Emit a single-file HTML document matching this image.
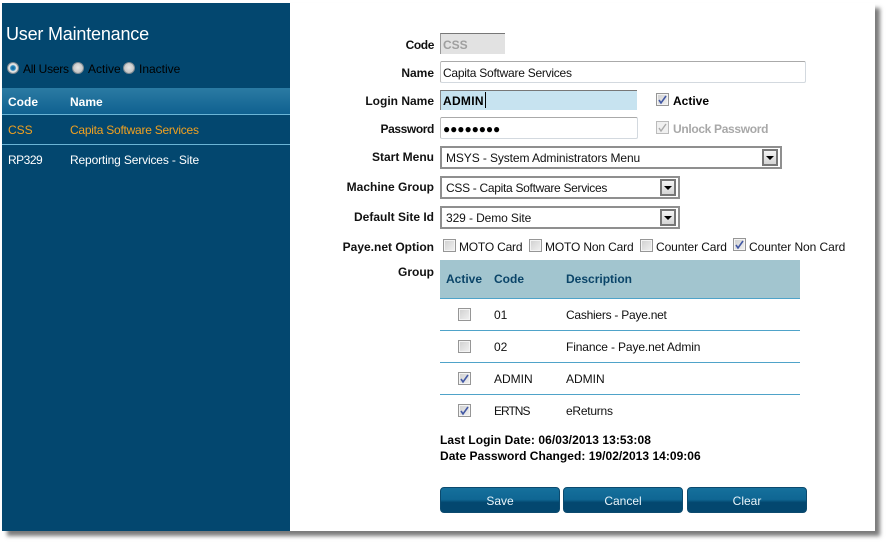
<!DOCTYPE html>
<html><head><meta charset="utf-8"><style>
html,body{margin:0;padding:0}
body{width:888px;height:544px;background:#fff;position:relative;overflow:hidden;font-family:"Liberation Sans",sans-serif;font-size:12px;color:#111}
div,span.a{position:absolute;white-space:nowrap;box-sizing:border-box}
#win{left:2px;top:3px;width:873px;height:528px;background:#fff;box-shadow:5px 5px 4px 0 #7c7c7c}
#side{left:2px;top:3px;width:288px;height:528px;background:#03476f}
.lab{right:454px;font-weight:bold;line-height:16px;height:16px;color:#111}
.t{line-height:16px;height:16px}
.inp{background:#fff;border:1px solid #d3d9df;border-top-color:#aaa;border-left-color:#c0c0c0;border-radius:2px}
.sel{background:#fff;border:2px solid #8f8f8f;height:23px}
.sel .tx{left:4px;top:2px;line-height:16px}
.arr{top:1px;width:16px;height:17px;right:2px;border:2px solid #777;background:linear-gradient(#f4f4f4,#d4d4d4)}
.arr:after{content:"";position:absolute;left:2px;top:5px;border:4px solid transparent;border-top:4px solid #000;border-bottom:0}
.cb{width:13px;height:13px;border:1px solid #969696;background:linear-gradient(135deg,#cfcfcf,#f2f2f2);box-shadow:inset 0 0 0 1px #f4f4f4}
.cb svg{position:absolute;left:0;top:0}
.rad{width:12px;height:12px;border-radius:50%;border:1px solid #7d8a93;background:radial-gradient(circle at 50% 45%,#e6e6e6,#b4b4b4)}
.hr{height:1px;background:#4fa3c9}
.btn{top:487px;height:26px;width:120px;border-radius:4px;background:linear-gradient(#15709c 0,#0f6693 48%,#03476f 60%,#03476f 100%);border:1px solid #0c4a6e;color:#e8f4fa;text-align:center;line-height:26px}
</style></head><body>
<div id="win"></div>
<div id="side"></div>
<div style="left:6px;top:23px;font-size:18px;line-height:22px;color:#fff;letter-spacing:-.2px">User Maintenance</div>
<div class="rad" style="left:7px;top:62px;background:radial-gradient(circle,#0d5f96 0,#2a8ac0 32%,#e8e8e8 48%,#b8b8b8 100%)"></div>
<div class="t" style="left:23px;top:61px;color:#000;letter-spacing:-.25px">All Users</div>
<div class="rad" style="left:72px;top:62px"></div>
<div class="t" style="left:88px;top:61px;color:#000">Active</div>
<div class="rad" style="left:123px;top:62px"></div>
<div class="t" style="left:139px;top:61px;color:#000">Inactive</div>
<div style="left:2px;top:88px;width:288px;height:26px;background:linear-gradient(#2b7ba3,#0f6190)"></div>
<div class="t" style="left:8px;top:94px;color:#fff;font-weight:bold">Code</div>
<div class="t" style="left:70px;top:94px;color:#fff;font-weight:bold">Name</div>
<div class="hr" style="left:2px;top:114px;width:288px;background:#6bb5d6"></div>
<div class="t" style="left:8px;top:122px;color:#f0a020">CSS</div>
<div class="t" style="left:70px;top:122px;color:#f0a020;letter-spacing:-.25px">Capita Software Services</div>
<div class="hr" style="left:2px;top:144px;width:288px;background:#6bb5d6"></div>
<div class="t" style="left:8px;top:152px;color:#fff;letter-spacing:-.5px">RP329</div>
<div class="t" style="left:70px;top:152px;color:#fff;letter-spacing:-.15px">Reporting Services - Site</div>

<div class="lab" style="top:37px;letter-spacing:-.4px">Code</div>
<div class="lab" style="top:65px">Name</div>
<div class="lab" style="top:93px">Login Name</div>
<div class="lab" style="top:121px;letter-spacing:-.4px">Password</div>
<div class="lab" style="top:149px">Start Menu</div>
<div class="lab" style="top:179px">Machine Group</div>
<div class="lab" style="top:209px">Default Site Id</div>
<div class="lab" style="top:239px">Paye.net Option</div>
<div class="lab" style="top:264px">Group</div>

<div style="left:440px;top:33px;width:65px;height:21px;background:#e2e2e2;border-top:1px solid #777;border-left:1px solid #999"></div>
<div class="t" style="left:443px;top:37px;color:#a0a0a0;font-weight:bold">CSS</div>
<div class="inp" style="left:440px;top:61px;width:366px;height:22px"></div>
<div class="t" style="left:443px;top:65px;letter-spacing:-.25px">Capita Software Services</div>
<div style="left:440px;top:90px;width:197px;height:20px;background:#c7e3f0;border-top:1px solid #777;border-left:1px solid #888"></div>
<div class="t" style="left:443px;top:93px;font-weight:bold;color:#000;letter-spacing:.3px">ADMIN</div>
<div style="left:485px;top:92px;width:1px;height:16px;background:#000"></div>
<div class="inp" style="left:440px;top:117px;width:198px;height:22px"></div>
<div class="t" style="left:443px;top:121px;font-size:12px;letter-spacing:-.1px;color:#000">●●●●●●●●</div>

<div class="sel" style="left:440px;top:146px;width:342px"><div class="tx" style="letter-spacing:-.1px">MSYS - System Administrators Menu</div><div class="arr"></div></div>
<div class="sel" style="left:440px;top:176px;width:240px"><div class="tx" style="letter-spacing:-.3px">CSS - Capita Software Services</div><div class="arr"></div></div>
<div class="sel" style="left:440px;top:206px;width:240px"><div class="tx" style="letter-spacing:-.1px">329 - Demo Site</div><div class="arr"></div></div>

<div class="cb" style="left:656px;top:93px"><svg width="11" height="11"><path d="M2 6l2 3 5-7" fill="none" stroke="#4258a4" stroke-width="1.6"/></svg></div>
<div class="t" style="left:673px;top:93px;font-weight:bold;color:#000">Active</div>
<div class="cb" style="left:656px;top:121px;border-color:#bbb;background:#f0f0f0;box-shadow:none"><svg width="11" height="11"><path d="M2 6l2 3 5-7" fill="none" stroke="#aaa" stroke-width="1.4"/></svg></div>
<div class="t" style="left:673px;top:121px;font-weight:bold;color:#a8a8a8;letter-spacing:-.33px">Unlock Password</div>

<div class="cb" style="left:443px;top:239px"></div>
<div class="t" style="left:459px;top:239px;letter-spacing:-.2px">MOTO Card</div>
<div class="cb" style="left:529px;top:239px"></div>
<div class="t" style="left:545px;top:239px;letter-spacing:-.15px">MOTO Non Card</div>
<div class="cb" style="left:640px;top:239px"></div>
<div class="t" style="left:656px;top:239px;letter-spacing:-.1px">Counter Card</div>
<div class="cb" style="left:733px;top:238px"><svg width="11" height="11"><path d="M2 6l2 3 5-7" fill="none" stroke="#4258a4" stroke-width="1.6"/></svg></div>
<div class="t" style="left:749px;top:239px;letter-spacing:-.07px">Counter Non Card</div>

<div style="left:440px;top:260px;width:360px;height:38px;background:#a2c5cf"></div>
<div class="t" style="left:446px;top:271px;font-weight:bold;color:#0a4468">Active</div>
<div class="t" style="left:494px;top:271px;font-weight:bold;color:#0a4468">Code</div>
<div class="t" style="left:566px;top:271px;font-weight:bold;color:#0a4468">Description</div>
<div class="hr" style="left:440px;top:298px;width:360px"></div>
<div class="hr" style="left:440px;top:330px;width:360px"></div>
<div class="hr" style="left:440px;top:362px;width:360px"></div>
<div class="hr" style="left:440px;top:394px;width:360px"></div>

<div class="cb" style="left:458px;top:308px"></div>
<div class="t" style="left:494px;top:307px">01</div>
<div class="t" style="left:566px;top:307px;letter-spacing:-.25px">Cashiers - Paye.net</div>
<div class="cb" style="left:458px;top:340px"></div>
<div class="t" style="left:494px;top:339px">02</div>
<div class="t" style="left:566px;top:339px;letter-spacing:-.13px">Finance - Paye.net Admin</div>
<div class="cb" style="left:458px;top:372px"><svg width="11" height="11"><path d="M2 6l2 3 5-7" fill="none" stroke="#4258a4" stroke-width="1.6"/></svg></div>
<div class="t" style="left:494px;top:371px">ADMIN</div>
<div class="t" style="left:566px;top:371px">ADMIN</div>
<div class="cb" style="left:458px;top:404px"><svg width="11" height="11"><path d="M2 6l2 3 5-7" fill="none" stroke="#4258a4" stroke-width="1.6"/></svg></div>
<div class="t" style="left:494px;top:403px;letter-spacing:-1px">ERTNS</div>
<div class="t" style="left:566px;top:403px;letter-spacing:-.25px">eReturns</div>

<div class="t" style="left:440px;top:432px;font-weight:bold;color:#000;letter-spacing:.06px">Last Login Date: 06/03/2013 13:53:08</div>
<div class="t" style="left:440px;top:448px;font-weight:bold;color:#000;letter-spacing:.03px">Date Password Changed: 19/02/2013 14:09:06</div>

<div class="btn" style="left:440px">Save</div>
<div class="btn" style="left:563px">Cancel</div>
<div class="btn" style="left:687px">Clear</div>
</body></html>
